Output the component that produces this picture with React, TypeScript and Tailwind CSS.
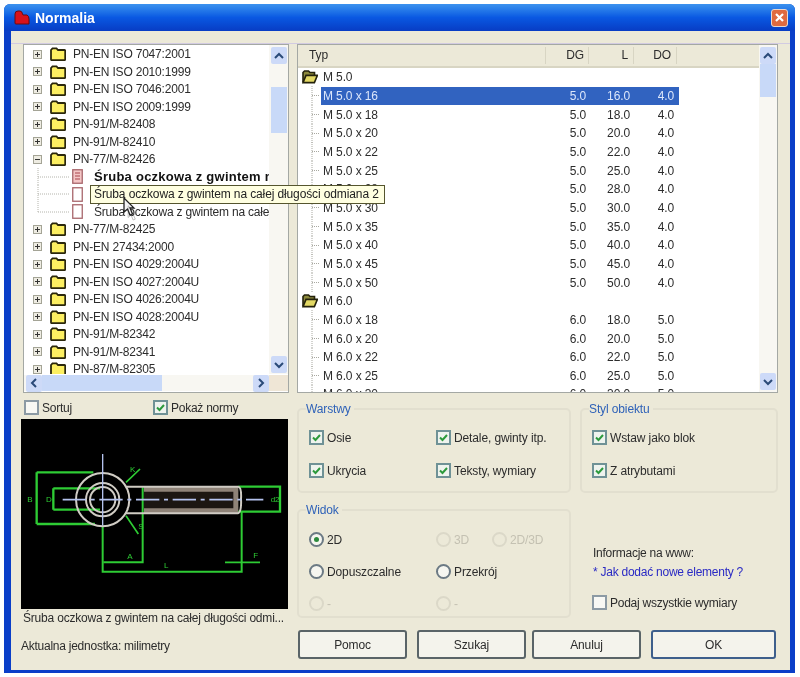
import type { ReactNode } from 'react';

const TREE_TOP = ['PN-EN ISO 7047:2001', 'PN-EN ISO 2010:1999', 'PN-EN ISO 7046:2001', 'PN-EN ISO 2009:1999', 'PN-91/M-82408', 'PN-91/M-82410'];
const TREE_BOTTOM = ['PN-77/M-82425', 'PN-EN 27434:2000', 'PN-EN ISO 4029:2004U', 'PN-EN ISO 4027:2004U', 'PN-EN ISO 4026:2004U', 'PN-EN ISO 4028:2004U', 'PN-91/M-82342', 'PN-91/M-82341', 'PN-87/M-82305'];
const M5 = [16, 18, 20, 22, 25, 28, 30, 35, 40, 45, 50];
const M6 = [18, 20, 22, 25, 30];

function Expander({ open }: { open?: boolean }) {
  return (
    <svg width="9" height="9" viewBox="0 0 9 9" className="shrink-0">
      <rect x="0.5" y="0.5" width="8" height="8" fill="#eeecE2" stroke="#a4a496" />
      <path d={open ? 'M2 4.5h5' : 'M2 4.5h5M4.5 2v5'} stroke="#333" />
    </svg>
  );
}

function Folder() {
  return (
    <svg width="16" height="14" viewBox="0 0 16 14" className="shrink-0">
      <path d="M1 12.4V3l1.5-1.6h4L8 3h6.4q.8 0 .8 1v8.4q0 .8-.8.8H2q-1 0-1-.8z" fill="#fcef62" stroke="#2a270c" strokeWidth="1.8" />
    </svg>
  );
}

function OpenFolder() {
  return (
    <svg width="16" height="14" viewBox="0 0 16 14" className="shrink-0">
      <path d="M1 12V2.5L2.5 1h4L8 2.5h4.5V5" fill="#8d8a3c" stroke="#24220c" strokeWidth="1.6" />
      <path d="M1 12.6 4 5.4h11.4l-3 7.2z" fill="#e3d964" stroke="#24220c" strokeWidth="1.6" />
    </svg>
  );
}

function Doc({ lined }: { lined?: boolean }) {
  return (
    <svg width="11" height="15" viewBox="0 0 11 15" className="shrink-0">
      <rect x="0.75" y="0.75" width="9.5" height="13.5" fill={lined ? '#f4c6c6' : '#fff'} stroke="#a8666c" strokeWidth="1.3" />
      {lined && <path d="M3 4h5M3 7h5M3 10h5" stroke="#a8444c" />}
    </svg>
  );
}

function Chevron({ dir }: { dir: 'up' | 'down' | 'left' | 'right' }) {
  const d = { up: 'M3 9l4-4 4 4', down: 'M3 5l4 4 4-4', left: 'M9 3 5 7l4 4', right: 'M5 3l4 4-4 4' }[dir];
  return (
    <svg width="14" height="14" viewBox="0 0 14 14">
      <path d={d} fill="none" stroke="#2a4a78" strokeWidth="2" />
    </svg>
  );
}

function ScrollBtn({ dir }: { dir: 'up' | 'down' | 'left' | 'right' }) {
  return (
    <div className="w-[16px] h-[17px] shrink-0 flex items-center justify-center rounded-[2px] bg-[#cddaf8]">
      <Chevron dir={dir} />
    </div>
  );
}

function Check({ checked, label }: { checked?: boolean; label: string }) {
  return (
    <label className="flex items-center gap-[3px] h-[15px] whitespace-nowrap">
      <span className={`w-[15px] h-[15px] shrink-0 border-2 flex items-center justify-center ${checked ? 'border-[#6f9296] bg-[#eef3ee]' : 'border-[#8c9aa4] bg-[#f8f8f4]'}`}>
        {checked && (
          <svg width="11" height="11" viewBox="0 0 11 11">
            <path d="M2 5.5 4.5 8 9 3" fill="none" stroke="#2c9a3c" strokeWidth="2" />
          </svg>
        )}
      </span>
      {label}
    </label>
  );
}

function Radio({ checked, disabled, label }: { checked?: boolean; disabled?: boolean; label: string }) {
  return (
    <label className={`flex items-center gap-[3px] h-[15px] whitespace-nowrap ${disabled ? 'text-[#c4c1b2]' : ''}`}>
      <span className={`w-[15px] h-[15px] shrink-0 rounded-full border-2 flex items-center justify-center ${disabled ? 'border-[#dbd8c8]' : 'border-[#6c7a84] bg-[#f6f6f0]'}`}>
        {checked && <span className="w-[5px] h-[5px] rounded-full bg-[#2c8a3c]" />}
      </span>
      {label}
    </label>
  );
}

function Group({ title, className, children }: { title: string; className: string; children: ReactNode }) {
  return (
    <fieldset className={`border-2 border-[#e2dfcf] rounded-[5px] pl-[10px] ${className}`}>
      <legend className="h-[14px] leading-[14px] pr-[3px] -ml-[3px] text-[#2f62b8]">{title}</legend>
      {children}
    </fieldset>
  );
}

function Leaf({ name, dg, l, d0, selected }: { name: string; dg: string; l: string; d0: string; selected?: boolean }) {
  return (
    <div className="flex h-[18.67px] items-center">
      <svg width="23" height="19" className="shrink-0">
        <path d="M14 0v19M14 9.5h8" stroke="#a8a8a0" strokeDasharray="1 1" />
      </svg>
      <div className={`grid grid-cols-[225px_43px_45px_45px] w-[358px] h-full items-center ${selected ? 'bg-[#3163c0] text-[#dbe6fa]' : ''}`}>
        <span className="pl-[2px]">{name}</span>
        <span className="text-right pr-[3px]">{dg}</span>
        <span className="text-right pr-[4px]">{l}</span>
        <span className="text-right pr-[5px]">{d0}</span>
      </div>
    </div>
  );
}

function FolderRow({ name }: { name: string }) {
  return (
    <div className="flex h-[18.67px] items-center pl-[4px] gap-[5px]">
      <OpenFolder />
      {name}
    </div>
  );
}

function Drawing() {
  // coordinates taken from a 3x crop of the preview
  return (
    <svg viewBox="3 0 801 570" className="w-full h-full" fill="none">
      <path d="M372 203H655V283H372" fill="#8f8378" />
      <path d="M372 218H640V268H372" fill="#1c1612" />
      <g stroke="#2ecc34" strokeWidth="7">
        <path d="M50 160H220M50 160V315M50 315H225" />
        <path d="M100 208H240M100 208V272M100 272H240" />
        <path d="M655 203H780V278H655" />
        <path d="M248 320V458H665V278" strokeWidth="6" />
        <path d="M250 430H368V205" strokeWidth="6" />
        <path d="M615 430H720" strokeWidth="5" />
        <path d="M318 190 360 150M318 290 355 345" strokeWidth="5" />
      </g>
      <g stroke="#d0ccc4" strokeWidth="6">
        <circle cx="248" cy="242" r="80" />
        <circle cx="248" cy="242" r="50" />
        <circle cx="248" cy="242" r="38" />
        <path d="M318 203H655M318 283H655M655 203Q665 205 663 240Q665 275 655 283" />
      </g>
      <path d="M128 242H730" stroke="#b4c2ee" strokeWidth="5" strokeDasharray="70 14 12 14" />
      <path d="M248 105V320" stroke="#b4c2ee" strokeWidth="4" />
      <g fill="#2ecc34" fontSize="24" fontFamily="Liberation Sans, sans-serif">
        <text x="22" y="250">B</text>
        <text x="78" y="248">D</text>
        <text x="330" y="158">K</text>
        <text x="355" y="330">S</text>
        <text x="322" y="420">A</text>
        <text x="432" y="446">L</text>
        <text x="700" y="418">F</text>
        <text x="752" y="248">d2</text>
      </g>
    </svg>
  );
}

export default function App() {
  return (
    <div className="relative w-[800px] h-[677px] bg-white overflow-hidden pt-[4px] pl-[4px] blur-[0.5px] text-[12px] leading-[14px] tracking-[-0.12px] text-[#2c2c2c] font-['Liberation_Sans',sans-serif]">
      <div className="w-[791px] h-[669px] flex flex-col rounded-t-[6px] overflow-hidden bg-[#0a3ec8]">
        {/* Title bar */}
        <div className="h-[27px] shrink-0 flex items-center pl-[10px] pr-[7px] bg-linear-to-b from-[#3c92ee] via-[#0a58e2] to-[#083cc4]">
          <svg width="16" height="15" viewBox="0 0 16 15" className="shrink-0">
            <path d="M1 13V4q0-3 3-3h2q2 0 2.5 3l.5 1h4q2 1 2 4v5H2q-1 0-1-1z" fill="#d8121c" stroke="#6a0a10" />
          </svg>
          <span className="ml-[5px] text-white font-bold text-[14px] tracking-normal">Normalia</span>
          <div className="ml-auto w-[17px] h-[18px] rounded-[3px] border border-[#e8d8d0] bg-[#e06a40] flex items-center justify-center">
            <svg width="11" height="11" viewBox="0 0 11 11">
              <path d="M2 2l7 7M9 2l-7 7" stroke="#fff" strokeWidth="2.2" />
            </svg>
          </div>
        </div>

        {/* Dialog body */}
        <div className="relative flex-1 ml-[7px] mr-[5px] mb-[3px] bg-[#ece9d8] flex gap-[8px] pl-[10px] pt-[13px]">
          <div className="absolute left-0 right-0 top-[12px] h-px bg-[#d2cbe2]" />

          {/* Left column */}
          <div className="w-[268px] shrink-0 flex flex-col">
            <div className="ml-[2px] w-[266px] h-[349px] border border-[#a4a8a4] bg-white relative flex flex-col">
              <div className="flex h-[329px]">
                <div className="w-[245px] overflow-hidden tracking-[-0.2px] pt-[0.5px]">
                  {TREE_TOP.map(n => (
                    <div key={n} className="flex h-[17.5px] items-center pl-[9px] gap-[8px]">
                      <Expander />
                      <Folder />
                      <span className="ml-[-1px] whitespace-nowrap">{n}</span>
                    </div>
                  ))}
                  <div className="flex h-[17.5px] items-center pl-[9px] gap-[8px]">
                    <Expander open />
                    <Folder />
                    <span className="ml-[-1px]">PN-77/M-82426</span>
                  </div>
                  {['Śruba oczkowa z gwintem na całej długości', 'Śruba oczkowa z gwintem na całej długości odmiana 2', 'Śruba oczkowa z gwintem na całej długości odmiana 3'].map((n, i) => (
                    <div key={n} className="flex h-[17.5px] items-center">
                      <svg width="48" height="18" className="shrink-0">
                        <path d={i === 2 ? 'M14 0v9M14 9h32' : 'M14 0v18M14 9h32'} stroke="#b4b4ac" strokeDasharray="1 1" />
                      </svg>
                      <Doc lined={i === 0} />
                      <span className={`ml-[11px] whitespace-nowrap ${i === 0 ? 'font-bold text-[13px] tracking-[0.25px] text-[#111]' : ''}`}>{n}</span>
                    </div>
                  ))}
                  {TREE_BOTTOM.map(n => (
                    <div key={n} className="flex h-[17.5px] items-center pl-[9px] gap-[8px]">
                      <Expander />
                      <Folder />
                      <span className="ml-[-1px] whitespace-nowrap">{n}</span>
                    </div>
                  ))}
                </div>
                <div className="w-[19px] shrink-0 bg-[#f8f7f2] flex flex-col items-center pt-[2px] pb-[1px]">
                  <ScrollBtn dir="up" />
                  <div className="w-[16px] h-[46px] mt-[23px] bg-[#c8d9f8]" />
                  <div className="mt-auto"><ScrollBtn dir="down" /></div>
                </div>
              </div>
              <div className="flex h-[16px] mt-[1px]">
                <div className="w-[245px] flex items-center pl-[2px] bg-[#f8f7f2]">
                  <ScrollBtn dir="left" />
                  <div className="w-[120px] h-[16px] bg-[#c8d9f8]" />
                  <div className="ml-auto"><ScrollBtn dir="right" /></div>
                </div>
                <div className="flex-1 bg-[#efe6d6]" />
              </div>
            </div>

            <div className="flex mt-[6px] h-[17px] items-center pl-[3px] tracking-[-0.25px]">
              <div className="w-[129px]"><Check label="Sortuj" /></div>
              <Check checked label="Pokaż normy" />
            </div>

            <div className="mt-[3px] w-[267px] h-[190px] bg-black">
              <Drawing />
            </div>
            <div className="mt-[2px] h-[14px] pl-[2px] whitespace-nowrap tracking-[-0.2px]">Śruba oczkowa z gwintem na całej długości odmi...</div>
            <div className="mt-[14px] h-[14px] tracking-[-0.25px]">Aktualna jednostka: milimetry</div>
          </div>

          {/* Right column */}
          <div className="w-[481px] shrink-0 flex flex-col">
            <div className="h-[349px] border border-[#a4a8a4] bg-white flex">
              <div className="w-[461px] overflow-hidden">
                <div className="h-[23px] bg-[#ece9d8] border-b-2 border-[#d8d5c3] grid grid-cols-[248px_43px_45px_43px_1fr] items-center">
                  <span className="pl-[11px] border-r border-[#d8d5c3] h-[17px] leading-[17px]">Typ</span>
                  <span className="text-right pr-[4px] border-r border-[#d8d5c3] h-[17px] leading-[17px]">DG</span>
                  <span className="text-right pr-[5px] border-r border-[#d8d5c3] h-[17px] leading-[17px]">L</span>
                  <span className="text-right pr-[5px] border-r border-[#d8d5c3] h-[17px] leading-[17px]">DO</span>
                </div>
                <FolderRow name="M 5.0" />
                {M5.map((a, i) => (
                  <Leaf key={a} name={`M 5.0 x ${a}`} dg="5.0" l={`${a}.0`} d0="4.0" selected={i === 0} />
                ))}
                <FolderRow name="M 6.0" />
                {M6.map(a => (
                  <Leaf key={a} name={`M 6.0 x ${a}`} dg="6.0" l={`${a}.0`} d0="5.0" />
                ))}
              </div>
              <div className="w-[18px] bg-[#f8f7f2] flex flex-col items-center pt-[2px] pb-[2px]">
                <ScrollBtn dir="up" />
                <div className="w-[16px] h-[33px] bg-[#c8d9f8]" />
                <div className="mt-auto"><ScrollBtn dir="down" /></div>
              </div>
            </div>

            <div className="flex gap-[9px] mt-[9px]">
              <Group title="Warstwy" className="w-[274px] h-[91px]">
                <div className="grid grid-cols-[127px_1fr] gap-y-[18px] pt-[14px]">
                  <Check checked label="Osie" />
                  <Check checked label="Detale, gwinty itp." />
                  <Check checked label="Ukrycia" />
                  <Check checked label="Teksty, wymiary" />
                </div>
              </Group>
              <Group title="Styl obiektu" className="w-[198px] h-[91px]">
                <div className="flex flex-col gap-[18px] pt-[14px]">
                  <Check checked label="Wstaw jako blok" />
                  <Check checked label="Z atrybutami" />
                </div>
              </Group>
            </div>

            <div className="flex gap-[9px] mt-[10px]">
              <Group title="Widok" className="w-[274px] h-[115px]">
                <div className="grid grid-cols-[127px_56px_1fr] pt-[15px] grid-rows-[15px_15px_15px] gap-y-[17px]">
                  <Radio checked label="2D" />
                  <Radio disabled label="3D" />
                  <Radio disabled label="2D/3D" />
                  <Radio label="Dopuszczalne" />
                  <div className="col-span-2"><Radio label="Przekrój" /></div>
                  <Radio disabled label="-" />
                  <div className="col-span-2"><Radio disabled label="-" /></div>
                </div>
              </Group>
              <div className="pl-[12px] pt-[43px] flex flex-col tracking-[-0.25px]">
                <div className="h-[14px] pl-[1px]">Informacje na www:</div>
                <div className="h-[14px] mt-[5px] pl-[1px] text-[#2a2ac4]">* Jak dodać nowe elementy ?</div>
                <div className="mt-[16px]"><Check label="Podaj wszystkie wymiary" /></div>
              </div>
            </div>

            <div className="flex mt-[12px] ml-[1px]">
              {[['Pomoc', 'w-[109px] mr-[10px]'], ['Szukaj', 'w-[109px] mr-[6px]'], ['Anuluj', 'w-[109px] mr-[10px]']].map(([t, c]) => (
                <button key={t} className={`h-[29px] rounded-[3px] border-2 border-[#5a6468] bg-[#f4f3ec] ${c}`}>{t}</button>
              ))}
              <button className="w-[125px] h-[29px] rounded-[3px] border-2 border-[#3e5f8c] bg-[#f4f3ec]">OK</button>
            </div>
          </div>
        </div>
      </div>

      {/* Tooltip over the tree and the list */}
      <div className="absolute left-[90px] top-[185px] w-[295px] h-[19px] border border-[#55552e] bg-[#ffffe1] text-[#222] leading-[17px] pl-[3px] whitespace-nowrap overflow-hidden">
        Śruba oczkowa z gwintem na całej długości odmiana 2
      </div>

      {/* Mouse cursor and its ghost */}
      <svg width="16" height="24" viewBox="0 0 16 24" className="absolute left-[123px] top-[197px]">
        <path d="M1 1v14l3.5-3 2.5 6 2.5-1-2.5-6H11z" fill="#f4f4f4" stroke="#222" strokeWidth="1.3" />
      </svg>
      <svg width="14" height="20" viewBox="0 0 16 24" className="absolute left-[127px] top-[205px] opacity-40">
        <path d="M1 1v14l3.5-3 2.5 6 2.5-1-2.5-6H11z" fill="none" stroke="#444" />
      </svg>
    </div>
  );
}
